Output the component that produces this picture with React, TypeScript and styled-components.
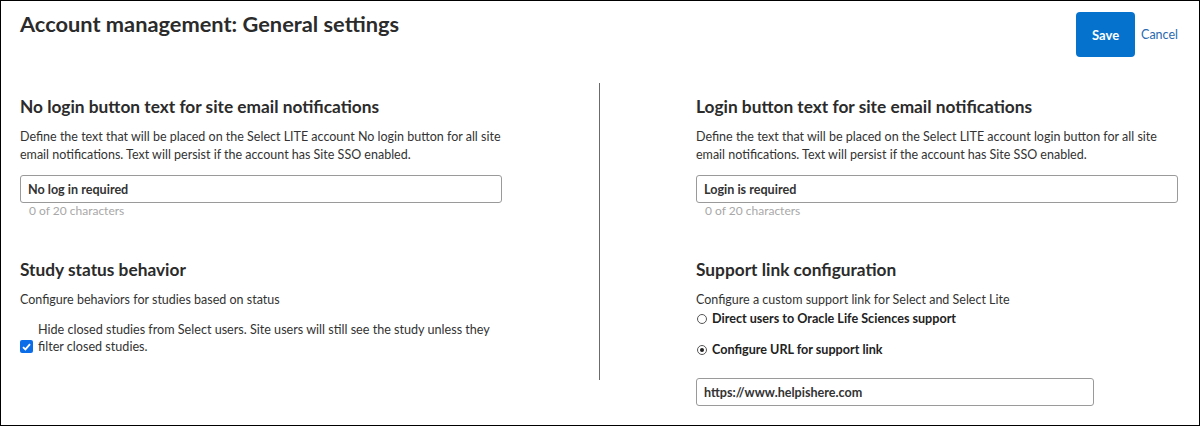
import styled, { createGlobalStyle } from 'styled-components';

const GlobalStyle = createGlobalStyle`
    body {
        margin: 0;
        background: #fff;
        font-family: Lato, "Noto Sans", sans-serif;
        color: #2b2b2b;
    }
`;

const Frame = styled.div`
    box-sizing: border-box;
    width: 1200px;
    height: 426px;
    border: 1px solid #000;
    padding: 0 20px 0 19px;
    overflow: hidden;
`;

const Header = styled.header`
    display: flex;
    justify-content: space-between;
    align-items: flex-start;
`;

const Title = styled.h1`
    margin: 9px 0 0;
    font-size: 21.8px;
    font-weight: 700;
    color: #2b2b2b;
`;

const Actions = styled.div`
    display: flex;
    align-items: center;
    gap: 6px;
    margin-top: 11px;
`;

const SaveButton = styled.button`
    width: 59px;
    height: 45px;
    border: none;
    border-radius: 4px;
    background: #0572ce;
    color: #fff;
    font-family: inherit;
    font-size: 13px;
    font-weight: 700;
`;

const CancelLink = styled.a`
    color: #2a6ab0;
    font-size: 12.5px;
    margin-right: 1px;
`;

const Columns = styled.div`
    display: grid;
    grid-template-columns: 579px 1px 1fr;
    margin-top: 26px;
`;

const Column = styled.div<{ $indent?: number }>`
    padding-left: ${p => p.$indent ?? 0}px;
    padding-top: 13px;
`;

const Divider = styled.div`
    background: #6b6b6b;
    height: 297px;
`;

const Section = styled.section`
    margin-bottom: 41px;
    &:last-child {
        margin-bottom: 0;
    }
`;

const Heading = styled.h2`
    margin: 0 0 11px;
    font-size: 17.3px;
    font-weight: 700;
    color: #2b2b2b;
`;

const Description = styled.p`
    margin: 0;
    font-size: 12.5px;
    line-height: 18px;
    color: #333;
    max-width: 500px;
`;

const TextInput = styled.input<{ $width: number; $gap?: number }>`
    box-sizing: border-box;
    display: block;
    width: ${p => p.$width}px;
    height: 28px;
    margin-top: ${p => p.$gap ?? 11}px;
    padding: 0 7px;
    border: 1px solid #9a9a9a;
    border-radius: 3px;
    font-family: inherit;
    font-size: 12.6px;
    font-weight: 700;
    color: #333;
`;

const Counter = styled.div`
    font-size: 12px;
    line-height: 14px;
    color: #a8a8a8;
    margin: 1px 0 0 9px;
`;

const CheckRow = styled.label`
    display: flex;
    align-items: flex-end;
    gap: 5px;
    margin-top: 12px;
    font-size: 12.6px;
    line-height: 17px;
    color: #333;
`;

const CheckBox = styled.span`
    flex: none;
    width: 13px;
    height: 13px;
    border-radius: 2px;
    background: #0b6ee8;
    display: flex;
    align-items: center;
    justify-content: center;
    margin-bottom: 2px;
`;

const CheckText = styled.span`
    max-width: 460px;
`;

const RadioGroup = styled.div`
    display: flex;
    flex-direction: column;
    gap: 13px;
    margin-top: 1px;
`;

const RadioRow = styled.label`
    display: flex;
    align-items: center;
    gap: 5px;
    font-size: 12.6px;
    font-weight: 700;
    color: #222;
    line-height: 18px;
`;

const RadioDot = styled.span<{ $on?: boolean }>`
    box-sizing: border-box;
    width: 10px;
    height: 10px;
    margin-left: 1px;
    border: 1px solid #555;
    border-radius: 50%;
    display: flex;
    align-items: center;
    justify-content: center;
    &::after {
        content: '';
        width: 4px;
        height: 4px;
        border-radius: 50%;
        background: ${p => (p.$on ? '#222' : 'transparent')};
    }
`;

const App = () => {
    return (
        <>
            <GlobalStyle />
            <Frame>
                <Header>
                    <Title>Account management: General settings</Title>
                    <Actions>
                        <SaveButton>Save</SaveButton>
                        <CancelLink>Cancel</CancelLink>
                    </Actions>
                </Header>
                <Columns>
                    <Column>
                        <Section>
                            <Heading>No login button text for site email notifications</Heading>
                            <Description>
                                Define the text that will be placed on the Select LITE account No login button for all site
                                email notifications. Text will persist if the account has Site SSO enabled.
                            </Description>
                            <TextInput $width={482} defaultValue="No log in required" />
                            <Counter>0 of 20 characters</Counter>
                        </Section>
                        <Section>
                            <Heading>Study status behavior</Heading>
                            <Description>Configure behaviors for studies based on status</Description>
                            <CheckRow>
                                <CheckBox>
                                    <svg width="9" height="8" viewBox="0 0 9 8">
                                        <path d="M1 4.2 L3.4 6.4 L8 1.2" stroke="#fff" strokeWidth="1.8" fill="none" />
                                    </svg>
                                </CheckBox>
                                <CheckText>
                                    Hide closed studies from Select users. Site users will still see the study unless they
                                    filter closed studies.
                                </CheckText>
                            </CheckRow>
                        </Section>
                    </Column>
                    <Divider />
                    <Column $indent={96}>
                        <Section>
                            <Heading>Login button text for site email notifications</Heading>
                            <Description>
                                Define the text that will be placed on the Select LITE account login button for all site
                                email notifications. Text will persist if the account has Site SSO enabled.
                            </Description>
                            <TextInput $width={482} defaultValue="Login is required" />
                            <Counter>0 of 20 characters</Counter>
                        </Section>
                        <Section>
                            <Heading>Support link configuration</Heading>
                            <Description>Configure a custom support link for Select and Select Lite</Description>
                            <RadioGroup>
                                <RadioRow>
                                    <RadioDot />
                                    Direct users to Oracle Life Sciences support
                                </RadioRow>
                                <RadioRow>
                                    <RadioDot $on />
                                    Configure URL for support link
                                </RadioRow>
                            </RadioGroup>
                            <TextInput $width={398} $gap={19} defaultValue="https://www.helpishere.com" />
                        </Section>
                    </Column>
                </Columns>
            </Frame>
        </>
    );
};

export default App;
